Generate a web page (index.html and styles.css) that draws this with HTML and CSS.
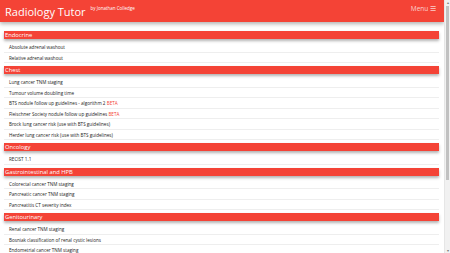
FILE: index.html
```html
<!DOCTYPE html>
<html lang="en">
<head>
    <meta charset="UTF-8">
    <meta name="viewport" content="width=device-width, initial-scale=1.0">
    <title>Radiology Tutor</title>
    <link rel="stylesheet" href="styles.css">
</head>
<body>
    <div class="page">
        <header class="topbar">
            <span class="title">Radiology Tutor</span>
            <span class="byline">by Jonathan Colledge</span>
            <span class="menu">Menu &#9776;</span>
        </header>
        <main class="content">
            <section class="group">
                <div class="group-title">Endocrine</div>
                <ul class="items">
                    <li>Absolute adrenal washout</li>
                    <li>Relative adrenal washout</li>
                </ul>
            </section>
            <section class="group">
                <div class="group-title">Chest</div>
                <ul class="items">
                    <li>Lung cancer TNM staging</li>
                    <li>Tumour volume doubling time</li>
                    <li>BTS nodule follow up guidelines - algorithm 2 <span class="beta">BETA</span></li>
                    <li>Fleischner Society nodule follow up guidelines <span class="beta">BETA</span></li>
                    <li>Brock lung cancer risk (use with BTS guidelines)</li>
                    <li>Herder lung cancer risk (use with BTS guidelines)</li>
                </ul>
            </section>
            <section class="group">
                <div class="group-title">Oncology</div>
                <ul class="items">
                    <li>RECIST 1.1</li>
                </ul>
            </section>
            <section class="group">
                <div class="group-title">Gastrointestinal and HPB</div>
                <ul class="items">
                    <li>Colorectal cancer TNM staging</li>
                    <li>Pancreatic cancer TNM staging</li>
                    <li>Pancreatitis CT severity index</li>
                </ul>
            </section>
            <section class="group">
                <div class="group-title">Genitourinary</div>
                <ul class="items">
                    <li>Renal cancer TNM staging</li>
                    <li>Bosniak classification of renal cystic lesions</li>
                    <li>Endometrial cancer TNM staging</li>
                </ul>
            </section>
        </main>
    </div>
    <div class="scrollbar">
        <div class="arrow">&#9652;</div>
        <div class="track">
            <div class="thumb"></div>
        </div>
        <div class="arrow">&#9662;</div>
    </div>
</body>
</html>
```

FILE: styles.css
```css
body {
    display: flex;
    height: 100vh;
    margin: 0;
    overflow: hidden;
    font-family: 'Open Sans', sans-serif;
    background-color: #fff;
    color: #222;
}
.page {
    flex: 1;
    min-width: 0;
    overflow: hidden;
}
.topbar {
    display: flex;
    align-items: center;
    height: 22px;
    padding: 0 8px 0 5px;
    background-color: #f44336;
    box-shadow: 0 2px 4px rgba(0, 0, 0, 0.3);
    color: #fff;
}
.title {
    font-size: 11px;
    line-height: 1;
}
.byline {
    align-self: flex-start;
    margin-top: 5px;
    margin-left: 5px;
    font-size: 4.5px;
}
.menu {
    align-self: flex-start;
    margin-top: 4px;
    margin-left: auto;
    font-size: 6.5px;
    color: rgba(255, 255, 255, 0.75);
}
.content {
    padding: 9px 5px 0 4px;
}
.group {
    margin-bottom: 3px;
}
.group-title {
    height: 8px;
    line-height: 8px;
    padding-left: 1px;
    font-size: 5.8px;
    color: #fff;
    background-color: #f44336;
    box-shadow: 0 2px 3px rgba(0, 0, 0, 0.3);
}
.items {
    list-style: none;
    margin: 3px 0 0;
    padding: 0;
}
.items li {
    box-sizing: border-box;
    height: 10.5px;
    line-height: 10px;
    padding-left: 5px;
    font-size: 4.6px;
    border-bottom: 1px solid #eee;
}
.beta {
    color: #f44336;
}
.scrollbar {
    display: flex;
    flex-direction: column;
    width: 5px;
    background-color: #f1f1f1;
    border-left: 1px solid #e6e6e6;
}
.arrow {
    height: 5px;
    font-size: 4px;
    line-height: 5px;
    text-align: center;
    color: #777;
}
.track {
    flex: 1;
    padding: 1px 1px 0;
}
.thumb {
    height: 174px;
    background-color: #c1c1c1;
}
```
